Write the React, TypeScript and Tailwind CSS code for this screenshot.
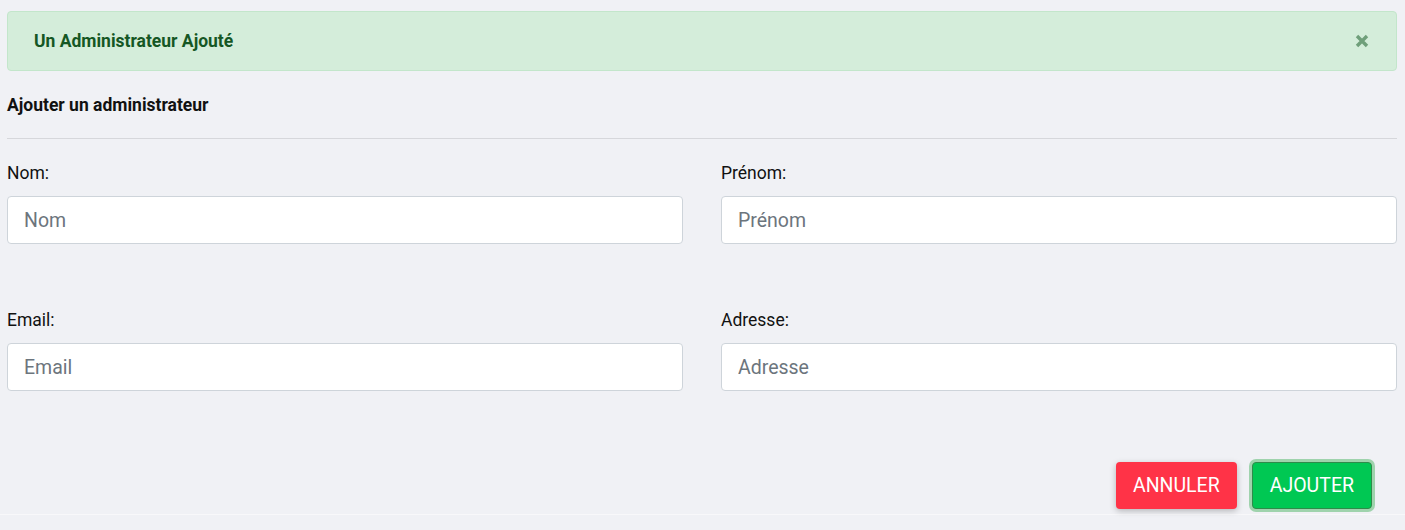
import React from "react";

const fields = [
  { label: "Nom:", placeholder: "Nom" },
  { label: "Prénom:", placeholder: "Prénom" },
  { label: "Email:", placeholder: "Email" },
  { label: "Adresse:", placeholder: "Adresse" },
];

export default function App() {
  return (
    <div className="min-h-[530px] bg-[#f0f1f5] font-['Roboto',sans-serif] text-[#212529]">
      <div className="px-[7px] pt-[11px] pr-[8px]">
        {/* success alert */}
        <div className="flex h-[60px] items-center justify-between rounded-[4px] border border-[#c3e6cb] bg-[#d4edda] pl-[26px] pr-[27px]">
          <span className="text-[17.5px] font-bold text-[#155724]">Un Administrateur Ajouté</span>
          <svg width="14" height="14" viewBox="0 0 14 14" className="text-[#6f9f7a]">
            <path d="M2 2L12 12M12 2L2 12" stroke="currentColor" strokeWidth="3.4" />
          </svg>
        </div>

        <h2 className="mt-[22px] text-[17.5px] leading-[24px] font-bold text-[#111]">Ajouter un administrateur</h2>
        <hr className="mt-[21px] border-t border-[#d6d7db]" />

        <div className="mt-[22px] grid grid-cols-2 gap-x-[38px] gap-y-[64px]">
          {fields.map((f) => (
            <div key={f.label} className="flex flex-col">
              <label className="text-[17.5px] leading-[24px] text-[#111]">{f.label}</label>
              <input
                placeholder={f.placeholder}
                className="mt-[11px] h-[48px] rounded-[4px] border border-[#ced4da] bg-white px-[16px] text-[19.5px] placeholder:text-[#6c757d] outline-none"
              />
            </div>
          ))}
        </div>

        <div className="mt-[71px] flex justify-end gap-[15px] pr-[25px]">
          <button className="h-[47px] rounded-[4px] bg-[#ff3347] px-[17px] text-[19.5px] text-white shadow-[0_2px_6px_rgba(0,0,0,0.25)]">
            ANNULER
          </button>
          <button className="h-[47px] rounded-[4px] border border-[#2e8b4a] bg-[#00c853] px-[17px] text-[19.5px] text-white ring-[3px] ring-[#9fd3ad]">
            AJOUTER
          </button>
        </div>
      </div>
      <div className="mt-[5px] border-t border-[#f8f8fa]" />
    </div>
  );
}
